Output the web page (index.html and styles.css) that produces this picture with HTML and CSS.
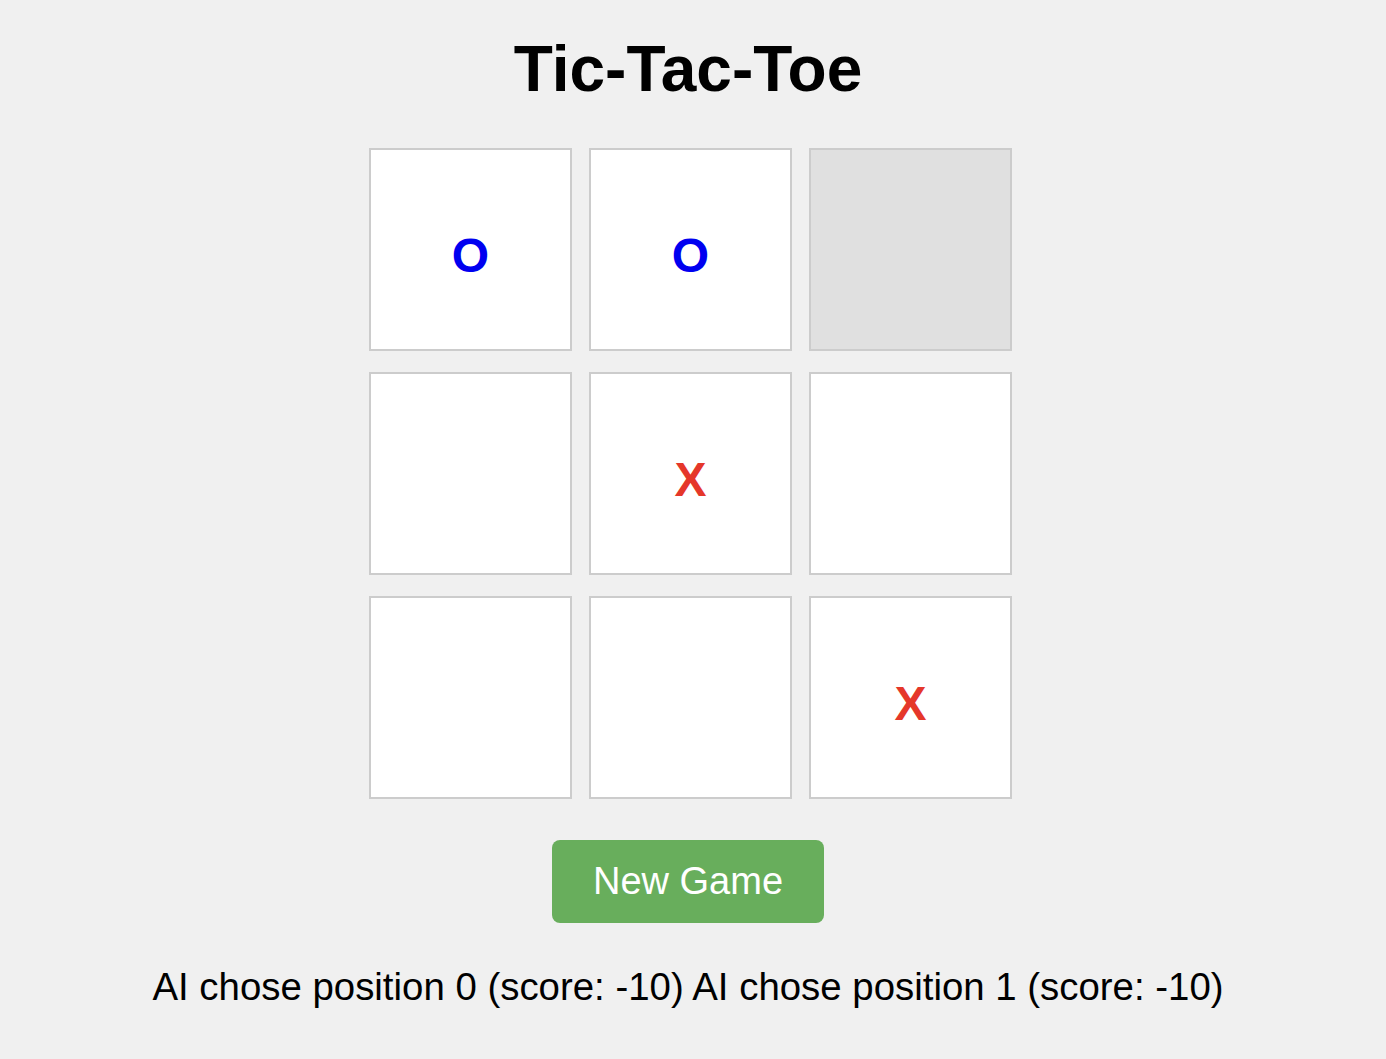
FILE: index.html
```html
<!DOCTYPE html>
<html lang="en">
<head>
    <meta charset="UTF-8">
    <meta name="viewport" content="width=device-width, initial-scale=1.0">
    <title>Tic-Tac-Toe</title>
    <link rel="stylesheet" href="styles.css">
</head>
<body>
    <div class="game">
        <h1>Tic-Tac-Toe</h1>

        <div class="board" id="board">
            <div class="cell o">O</div>
            <div class="cell o">O</div>
            <div class="cell hover"></div>
            <div class="cell"></div>
            <div class="cell x">X</div>
            <div class="cell"></div>
            <div class="cell"></div>
            <div class="cell"></div>
            <div class="cell x">X</div>
        </div>

        <button class="new-game" id="newGame">New Game</button>

        <div class="status" id="status">AI chose position 0 (score: -10) AI chose position 1 (score: -10)</div>
    </div>
</body>
</html>
```

FILE: styles.css
```css
body {
    font-family: "Liberation Sans", Arial, sans-serif;
    background-color: #f0f0f0;
    margin: 0;
    padding: 0 10px 0 0;
}
.game {
    display: flex;
    flex-direction: column;
    align-items: center;
    padding-top: 33px;
}
h1 {
    margin: 0 0 43px;
    font-size: 64px;
    line-height: 72px;
    font-weight: bold;
    color: #000;
}
.board {
    display: grid;
    grid-template-columns: repeat(3, 203px);
    grid-auto-rows: 203px;
    column-gap: 17px;
    row-gap: 21px;
    margin-left: 5px;
}
.cell {
    box-sizing: border-box;
    background-color: #fff;
    border: 2px solid #cccccc;
    display: flex;
    align-items: center;
    justify-content: center;
    font-size: 48px;
    font-weight: bold;
    padding-top: 12px;
    cursor: pointer;
}
.cell.hover {
    background-color: #e0e0e0;
}
.cell.o {
    color: #0000f0;
}
.cell.x {
    color: #e5372a;
}
.new-game {
    margin-top: 41px;
    width: 272px;
    height: 83px;
    background-color: #68ae5c;
    color: #fff;
    border: none;
    border-radius: 8px;
    font-family: "Liberation Sans", Arial, sans-serif;
    font-size: 38px;
    cursor: pointer;
}
.status {
    margin-top: 42px;
    font-size: 38.4px;
    line-height: 44px;
    color: #000;
}
```
